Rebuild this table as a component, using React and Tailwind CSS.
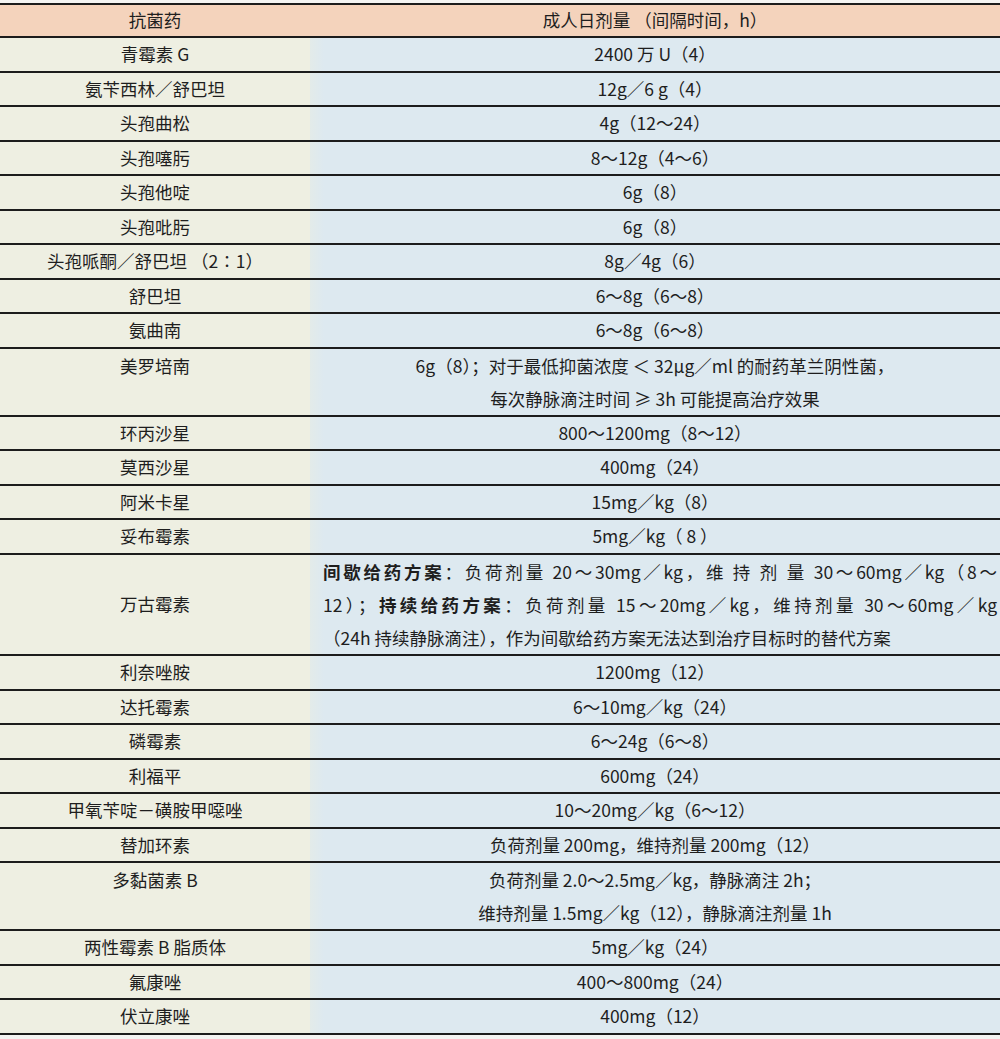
const rows = [
  { drug: "青霉素 G", dose: ["2400 万 U（4）"] },
  { drug: "氨苄西林／舒巴坦", dose: ["12g／6 g（4）"] },
  { drug: "头孢曲松", dose: ["4g（12～24）"] },
  { drug: "头孢噻肟", dose: ["8～12g（4～6）"] },
  { drug: "头孢他啶", dose: ["6g（8）"] },
  { drug: "头孢吡肟", dose: ["6g（8）"] },
  { drug: "头孢哌酮／舒巴坦 （2∶1）", dose: ["8g／4g（6）"] },
  { drug: "舒巴坦", dose: ["6～8g（6～8）"] },
  { drug: "氨曲南", dose: ["6～8g（6～8）"] },
  {
    drug: "美罗培南",
    top: true,
    dose: [
      "6g（8）；对于最低抑菌浓度 ＜ 32μg／ml 的耐药革兰阴性菌，",
      "每次静脉滴注时间 ≥ 3h 可能提高治疗效果",
    ],
  },
  { drug: "环丙沙星", dose: ["800～1200mg（8～12）"] },
  { drug: "莫西沙星", dose: ["400mg（24）"] },
  { drug: "阿米卡星", dose: ["15mg／kg（8）"] },
  { drug: "妥布霉素", dose: ["5mg／kg（ 8 ）"] },
  { drug: "万古霉素", vanco: true },
  { drug: "利奈唑胺", dose: ["1200mg（12）"] },
  { drug: "达托霉素", dose: ["6～10mg／kg（24）"] },
  { drug: "磷霉素", dose: ["6～24g（6～8）"] },
  { drug: "利福平", dose: ["600mg（24）"] },
  { drug: "甲氧苄啶－磺胺甲噁唑", dose: ["10～20mg／kg（6～12）"] },
  { drug: "替加环素", dose: ["负荷剂量 200mg，维持剂量 200mg（12）"] },
  {
    drug: "多黏菌素 B",
    top: true,
    dose: [
      "负荷剂量 2.0～2.5mg／kg，静脉滴注 2h；",
      "维持剂量 1.5mg／kg（12），静脉滴注剂量 1h",
    ],
  },
  { drug: "两性霉素 B 脂质体", dose: ["5mg／kg（24）"] },
  { drug: "氟康唑", dose: ["400～800mg（24）"] },
  { drug: "伏立康唑", dose: ["400mg（12）"] },
];

const Vancomycin = () => (
  <div className="pl-[13px] pr-[3px] leading-[33.33px]">
    <div className="text-justify [text-align-last:justify]">
      <span className="font-bold">间歇给药方案</span>：负荷剂量 20～30mg／kg，维 持 剂 量 30～60mg／kg（8～
    </div>
    <div className="text-justify [text-align-last:justify]">
      12）；<span className="font-bold">持续给药方案</span>：负荷剂量 15～20mg／kg，维持剂量 30～60mg／kg
    </div>
    <div>（24h 持续静脉滴注），作为间歇给药方案无法达到治疗目标时的替代方案</div>
  </div>
);

const Row = ({ row }) => {
  const multi = row.vanco || row.dose.length > 1;
  return (
    <div className="grid grid-cols-[310px_1fr] border-b-2 border-[#1c1c1c]">
      <div
        className={
          "flex justify-center bg-[#eeefe2] " +
          (row.top ? "items-start leading-[33px]" : "items-center leading-[32.5px]")
        }
      >
        {row.drug}
      </div>
      <div className="bg-[linear-gradient(to_right,#e3ebe9,#dde9f0_14px)]">
        {row.vanco ? (
          <Vancomycin />
        ) : (
          <div className={"text-center " + (multi ? "leading-[33px]" : "leading-[32.5px]")}>
            {row.dose.map((line, i) => (
              <div key={i}>{line}</div>
            ))}
          </div>
        )}
      </div>
    </div>
  );
};

const App = () => {
  return (
    <div
      className="min-h-[1039px] bg-[#f4f4f2] pt-[3px] text-[17.5px] text-[#1e1e1e]"
      style={{ fontFamily: '"Noto Sans CJK SC", "Noto Sans", sans-serif' }}
    >
      <div className="border-t-2 border-[#1c1c1c]">
        <div className="grid h-[33px] grid-cols-[310px_1fr] items-center border-b-2 border-[#1c1c1c] bg-[#f4d3bc]">
          <div className="text-center">抗菌药</div>
          <div className="text-center">成人日剂量 （间隔时间，h）</div>
        </div>
        {rows.map((row) => (
          <Row key={row.drug} row={row} />
        ))}
      </div>
    </div>
  );
};

export default App;
